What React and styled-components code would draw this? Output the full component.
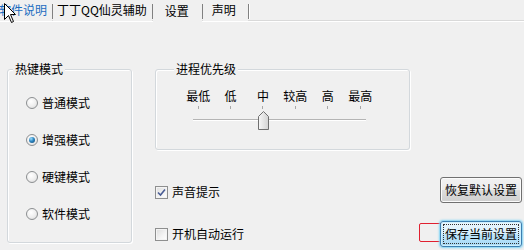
import React from "react";
import styled, { createGlobalStyle } from "styled-components";

const Global = createGlobalStyle`
  html, body { margin: 0; padding: 0; background: #f0f0f0; }
  body { width: 524px; height: 250px; overflow: hidden; font-family: "Noto Sans CJK SC", "Noto Sans", sans-serif; font-size: 12px; color: #000; }
  #root { width: 524px; height: 250px; }
`;

const Page = styled.div`
  position: relative;
  width: 524px;
  height: 250px;
  overflow: hidden;
  background: #f0f0f0;
`;

const TabBar = styled.div`
  display: flex;
  align-items: stretch;
  height: 20px;
  border-bottom: 1px solid #d9d9d9;
  box-shadow: 0 1px 0 #ffffff;
`;

const Tab = styled.div`
  display: flex;
  align-items: center;
  height: ${(p) => (p.$active ? "21px" : "20px")};
  margin-bottom: ${(p) => (p.$active ? "-1px" : "0")};
  margin-left: ${(p) => p.$ml || 0}px;
  padding: 0 ${(p) => p.$pr}px ${(p) => (p.$active ? "3px" : "1px")} ${(p) => p.$pl}px;
  background: #f0f0f0;
  color: ${(p) => (p.$hover ? "#1b6cc0" : "#000")};
  line-height: 14px;
  white-space: nowrap;
`;

const TabSep = styled.div`
  width: 1px;
  height: 15px;
  margin-top: 4px;
  background: #808080;
  box-shadow: 1px 0 0 #ffffff;
`;

const Content = styled.div`
  display: flex;
  padding: 48px 0 0 7px;
  gap: 23px;
`;

const Group = styled.div`
  position: relative;
  box-sizing: border-box;
  width: ${(p) => p.$w}px;
  height: ${(p) => p.$h}px;
  border: 1px solid #d3d8dc;
  border-radius: 3px;
  box-shadow: inset 1px 1px 0 #ffffff, 1px 1px 0 #ffffff;
  padding-top: ${(p) => p.$pt}px;
`;

const Legend = styled.span`
  position: absolute;
  top: -8px;
  left: ${(p) => p.$left}px;
  padding: 0 2px;
  background: #f0f0f0;
  line-height: 14px;
`;

const RadioList = styled.div`
  display: flex;
  flex-direction: column;
  gap: 21px;
  padding-left: 18px;
`;

const OptionRow = styled.label`
  display: flex;
  align-items: center;
  gap: 4px;
  height: 16px;
  line-height: 14px;
`;

const RadioCircle = styled.span`
  box-sizing: border-box;
  width: 12px;
  height: 12px;
  border-radius: 50%;
  border: 1px solid #8c8f91;
  background: radial-gradient(circle at 40% 35%, #ffffff 0%, #eeeeee 55%, #d4d4d4 100%);
  display: flex;
  align-items: center;
  justify-content: center;
  &::after {
    content: "";
    display: ${(p) => (p.$checked ? "block" : "none")};
    width: 6px;
    height: 6px;
    border-radius: 50%;
    background: radial-gradient(circle at 35% 30%, #9fe0ff 0%, #2d86c2 45%, #14476e 100%);
  }
`;

const RightCol = styled.div`
  display: flex;
  flex-direction: column;
  flex: 1;
`;

const Slider = styled.div`
  position: relative;
  width: 173px;
  margin-left: 37px;
`;

const TickRow = styled.div`
  display: flex;
  margin-left: -11px;
  margin-top: ${(p) => p.$mt || 0}px;
`;

const TickCell = styled.div`
  width: 32.4px;
  flex: none;
  display: flex;
  justify-content: center;
  line-height: 14px;
  white-space: nowrap;
`;

const Tick = styled.span`
  width: 1px;
  height: 3px;
  background: #a8a8a8;
`;

const Track = styled.div`
  position: relative;
  margin-top: 10px;
  height: 1px;
  background: #b4b4b4;
  border-bottom: 1px solid #ffffff;
`;

const Thumb = styled.svg`
  position: absolute;
  left: 65px;
  top: -8px;
`;

const BottomRow = styled.div`
  display: flex;
  justify-content: space-between;
  margin-top: 27px;
  padding-right: 2px;
`;

const CheckCol = styled.div`
  display: flex;
  flex-direction: column;
  gap: 26px;
  padding-top: 7px;
`;

const CheckBox = styled.span`
  box-sizing: border-box;
  width: 13px;
  height: 13px;
  border: 1px solid #8e8f8f;
  background: linear-gradient(135deg, #dcdcdc 0%, #f4f4f4 60%, #ffffff 100%);
  box-shadow: inset 0 0 0 1px #f4f4f4;
  display: flex;
  align-items: center;
  justify-content: center;
`;

const ButtonCol = styled.div`
  position: relative;
  display: flex;
  flex-direction: column;
  gap: 18px;
`;

const Button = styled.button`
  position: relative;
  z-index: 1;
  box-sizing: border-box;
  width: 82px;
  height: 26px;
  padding: 0;
  font-family: "Noto Sans CJK SC", "Noto Sans", sans-serif;
  font-size: 12px;
  line-height: 14px;
  color: #000;
  border: 1px solid ${(p) => (p.$focus ? "#3c7fb1" : "#707070")};
  border-radius: 3px;
  background: ${(p) =>
    p.$focus
      ? "linear-gradient(#eaf6fd 0%, #d9f0fc 50%, #bee6fd 50%, #a7d9f5 100%)"
      : "linear-gradient(#f2f2f2 0%, #ebebeb 50%, #dddddd 50%, #cfcfcf 100%)"};
  box-shadow: ${(p) =>
    p.$focus
      ? "inset 0 0 0 1px #cdeffd, 0 0 2px 1px #7fd3f5"
      : "inset 0 0 0 1px #fbfbfb"};
  outline: ${(p) => (p.$focus ? "1px dotted #333" : "none")};
  outline-offset: -4px;
`;

const RedMark = styled.div`
  position: absolute;
  left: -21px;
  top: 46px;
  width: 78px;
  height: 19px;
  box-sizing: border-box;
  border: 1px solid #e02030;
  border-radius: 2px;
  z-index: 0;
`;

const Cursor = styled.svg`
  position: absolute;
  left: 4px;
  top: 3px;
  z-index: 5;
`;

const levels = ["最低", "低", "中", "较高", "高", "最高"];

export default function App() {
  return (
    <Page>
      <Global />
      <TabBar>
        <Tab $ml={-1} $pl={0} $pr={5} $hover>软件说明</Tab>
        <TabSep />
        <Tab $pl={4} $pr={5}>丁丁QQ仙灵辅助</Tab>
        <TabSep />
        <Tab $pl={12} $pr={13} $active>设置</Tab>
        <TabSep />
        <Tab $pl={9} $pr={12}>声明</Tab>
        <TabSep />
      </TabBar>
      <Content>
        <Group $w={125} $h={174} $pt={25}>
          <Legend $left={5}>热键模式</Legend>
          <RadioList>
            <OptionRow><RadioCircle />普通模式</OptionRow>
            <OptionRow><RadioCircle $checked />增强模式</OptionRow>
            <OptionRow><RadioCircle />硬键模式</OptionRow>
            <OptionRow><RadioCircle />软件模式</OptionRow>
          </RadioList>
        </Group>
        <RightCol>
          <Group $w={255} $h={81} $pt={19}>
            <Legend $left={18}>进程优先级</Legend>
            <Slider>
              <TickRow>
                {levels.map((l) => (
                  <TickCell key={l}>{l}</TickCell>
                ))}
              </TickRow>
              <TickRow $mt={3}>
                {levels.map((l) => (
                  <TickCell key={l}><Tick /></TickCell>
                ))}
              </TickRow>
              <Track>
                <Thumb width="11" height="19" viewBox="0 0 11 19">
                  <defs>
                    <linearGradient id="tg" x1="0" y1="0" x2="1" y2="0">
                      <stop offset="0" stopColor="#f7f7f7" />
                      <stop offset="1" stopColor="#d2d2d2" />
                    </linearGradient>
                  </defs>
                  <path d="M0.5 5.5 L5.5 0.5 L10.5 5.5 L10.5 18.5 L0.5 18.5 Z" fill="url(#tg)" stroke="#6f6f6f" strokeWidth="1" />
                </Thumb>
              </Track>
            </Slider>
          </Group>
          <BottomRow>
            <CheckCol>
              <OptionRow>
                <CheckBox>
                  <svg width="9" height="9" viewBox="0 0 9 9">
                    <path d="M1 4.5 L3.5 7 L8 1.5" fill="none" stroke="#4a5d95" strokeWidth="1.6" />
                  </svg>
                </CheckBox>
                声音提示
              </OptionRow>
              <OptionRow>
                <CheckBox />
                开机自动运行
              </OptionRow>
            </CheckCol>
            <ButtonCol>
              <Button>恢复默认设置</Button>
              <RedMark />
              <Button $focus>保存当前设置</Button>
            </ButtonCol>
          </BottomRow>
        </RightCol>
      </Content>
      <Cursor width="13" height="21" viewBox="0 0 13 21">
        <path d="M0.5 0.5 L0.5 16.5 L4.5 12.5 L7.5 19.5 L9.5 18.5 L6.5 11.5 L11.5 11.5 Z" fill="#ffffff" stroke="#000000" strokeWidth="1" strokeLinejoin="miter" />
      </Cursor>
    </Page>
  );
}
